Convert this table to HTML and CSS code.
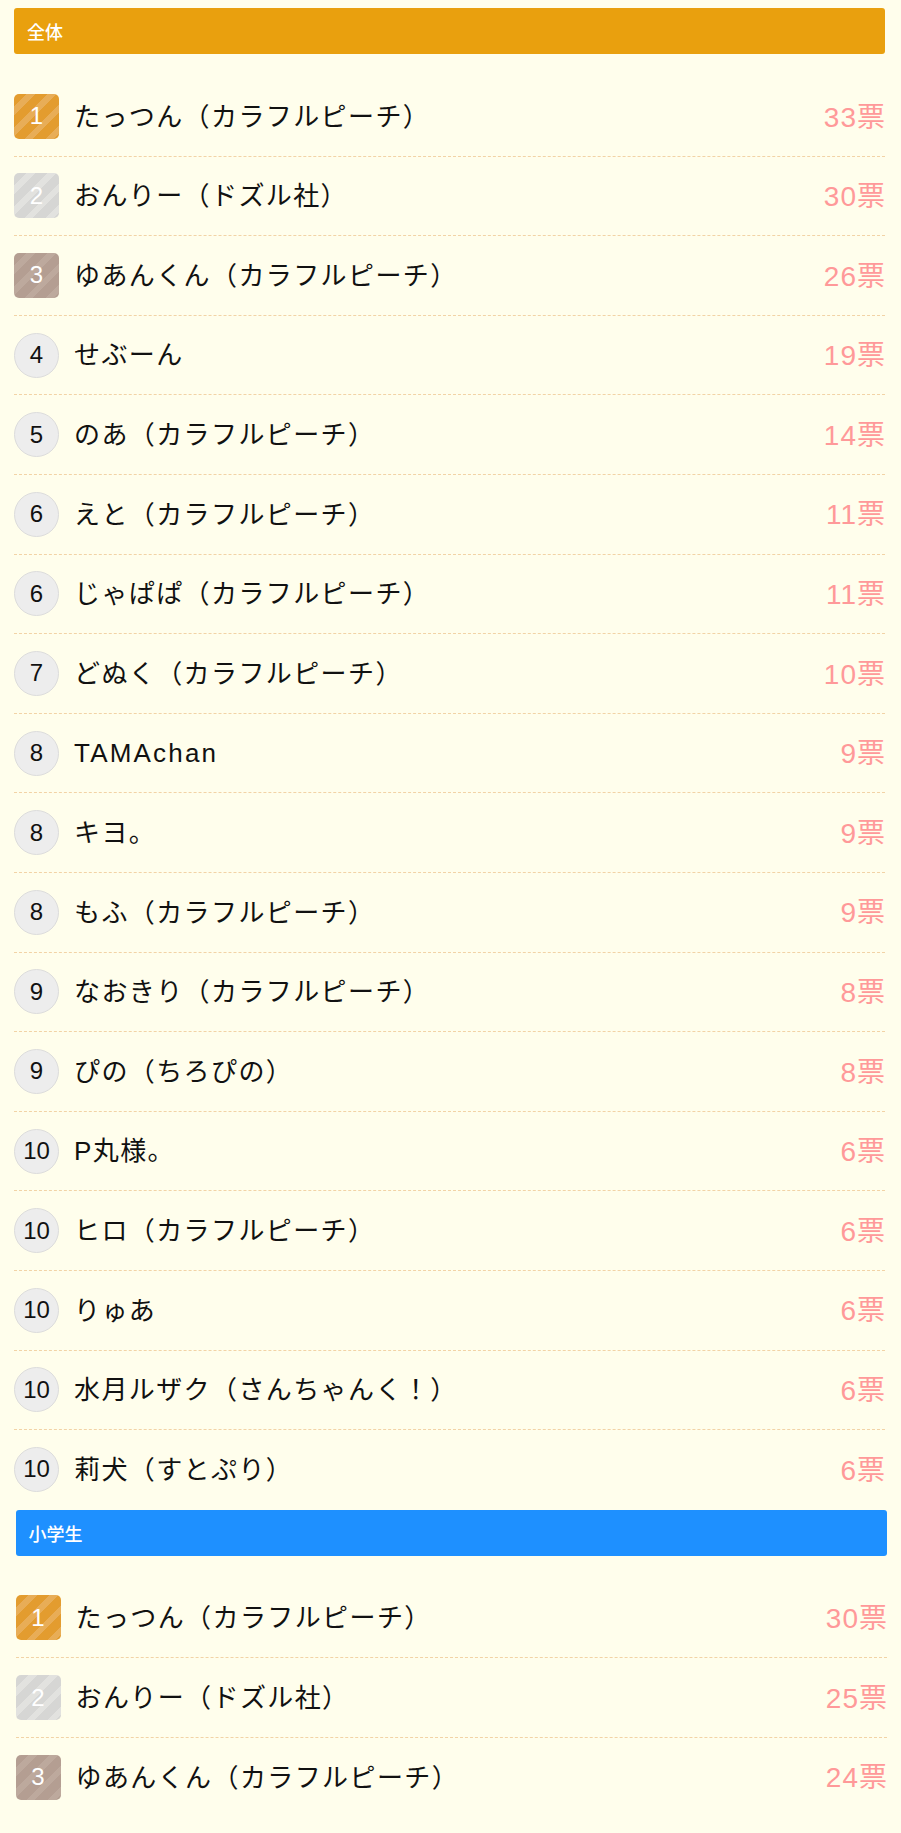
FILE: index.html
```html
<!DOCTYPE html>
<html lang="ja">
<head>
<meta charset="utf-8">
<title>ランキング</title>
<link rel="stylesheet" href="styles.css">
</head>
<body>
<section class="section">
  <h2 class="section-title title-orange">全体</h2>
  <ul class="ranking">
    <li class="row"><span class="badge gold">1</span><span class="name">たっつん（カラフルピーチ）</span><span class="votes">33票</span></li>
    <li class="row"><span class="badge silver">2</span><span class="name">おんりー（ドズル社）</span><span class="votes">30票</span></li>
    <li class="row"><span class="badge bronze">3</span><span class="name">ゆあんくん（カラフルピーチ）</span><span class="votes">26票</span></li>
    <li class="row"><span class="badge circle">4</span><span class="name">せぶーん</span><span class="votes">19票</span></li>
    <li class="row"><span class="badge circle">5</span><span class="name">のあ（カラフルピーチ）</span><span class="votes">14票</span></li>
    <li class="row"><span class="badge circle">6</span><span class="name">えと（カラフルピーチ）</span><span class="votes">11票</span></li>
    <li class="row"><span class="badge circle">6</span><span class="name">じゃぱぱ（カラフルピーチ）</span><span class="votes">11票</span></li>
    <li class="row"><span class="badge circle">7</span><span class="name">どぬく（カラフルピーチ）</span><span class="votes">10票</span></li>
    <li class="row"><span class="badge circle">8</span><span class="name name-latin">TAMAchan</span><span class="votes">9票</span></li>
    <li class="row"><span class="badge circle">8</span><span class="name">キヨ。</span><span class="votes">9票</span></li>
    <li class="row"><span class="badge circle">8</span><span class="name">もふ（カラフルピーチ）</span><span class="votes">9票</span></li>
    <li class="row"><span class="badge circle">9</span><span class="name">なおきり（カラフルピーチ）</span><span class="votes">8票</span></li>
    <li class="row"><span class="badge circle">9</span><span class="name">ぴの（ちろぴの）</span><span class="votes">8票</span></li>
    <li class="row"><span class="badge circle">10</span><span class="name">P丸様。</span><span class="votes">6票</span></li>
    <li class="row"><span class="badge circle">10</span><span class="name">ヒロ（カラフルピーチ）</span><span class="votes">6票</span></li>
    <li class="row"><span class="badge circle">10</span><span class="name">りゅあ</span><span class="votes">6票</span></li>
    <li class="row"><span class="badge circle">10</span><span class="name">水月ルザク（さんちゃんく！）</span><span class="votes">6票</span></li>
    <li class="row"><span class="badge circle">10</span><span class="name">莉犬（すとぷり）</span><span class="votes">6票</span></li>
  </ul>
</section>
<section class="section section-second">
  <h2 class="section-title title-blue">小学生</h2>
  <ul class="ranking">
    <li class="row"><span class="badge gold">1</span><span class="name">たっつん（カラフルピーチ）</span><span class="votes">30票</span></li>
    <li class="row"><span class="badge silver">2</span><span class="name">おんりー（ドズル社）</span><span class="votes">25票</span></li>
    <li class="row"><span class="badge bronze">3</span><span class="name">ゆあんくん（カラフルピーチ）</span><span class="votes">24票</span></li>
  </ul>
</section>
</body>
</html>
```

FILE: styles.css
```css
html, body {
  margin: 0;
  padding: 0;
  background: #fffeec;
}

body {
  padding-top: 8px;
  font-family: "Liberation Sans", "Noto Sans CJK JP", sans-serif;
  color: #111;
}

.section {
  margin: 0 16px 0 14px;
}

.section-second {
  margin: 1px 14px 0 15.5px;
}

.section-title {
  margin: 0 0 23px;
  height: 46px;
  display: flex;
  align-items: center;
  padding-left: 13px;
  border-radius: 3px;
  color: #fff;
  font-family: "Noto Sans CJK JP", sans-serif;
  font-size: 18px;
  font-weight: 500;
}

.title-orange {
  background: #e9a00e;
}

.title-blue {
  background: #1e90ff;
}

.ranking {
  list-style: none;
  margin: 0;
  padding: 0;
}

.row {
  display: flex;
  align-items: center;
  padding: 16.8px 0;
  border-bottom: 1px dashed #f2d3a6;
}

.row:last-child {
  border-bottom: none;
}

.badge {
  flex: none;
  width: 45px;
  height: 45px;
  box-sizing: border-box;
  display: flex;
  align-items: center;
  justify-content: center;
  font-family: "Liberation Sans", sans-serif;
  font-size: 24px;
  line-height: 1;
}

.gold, .silver, .bronze {
  color: #fff;
  border-radius: 5px;
}

.gold {
  background: repeating-linear-gradient(135deg, #e39c2f 0 9px, #e8ad57 9px 15px);
}

.silver {
  background: repeating-linear-gradient(135deg, #d6d6d4 0 9px, #e2e2df 9px 15px);
}

.bronze {
  background: repeating-linear-gradient(135deg, #b49e92 0 9px, #bda99d 9px 15px);
}

.circle {
  border-radius: 50%;
  background: #ededed;
  border: 1px solid #dcdcdc;
  color: #111;
}

.name {
  flex: 1;
  margin-left: 15px;
  padding-top: 2px;
  font-size: 26px;
  letter-spacing: 1.4px;
  line-height: 1.2;
}

.name-latin {
  letter-spacing: 2.2px;
}

.votes {
  flex: none;
  color: #f99;
  padding-top: 2px;
  font-size: 28px;
  letter-spacing: 1px;
  margin-right: -1px;
  line-height: 1.2;
}
```
